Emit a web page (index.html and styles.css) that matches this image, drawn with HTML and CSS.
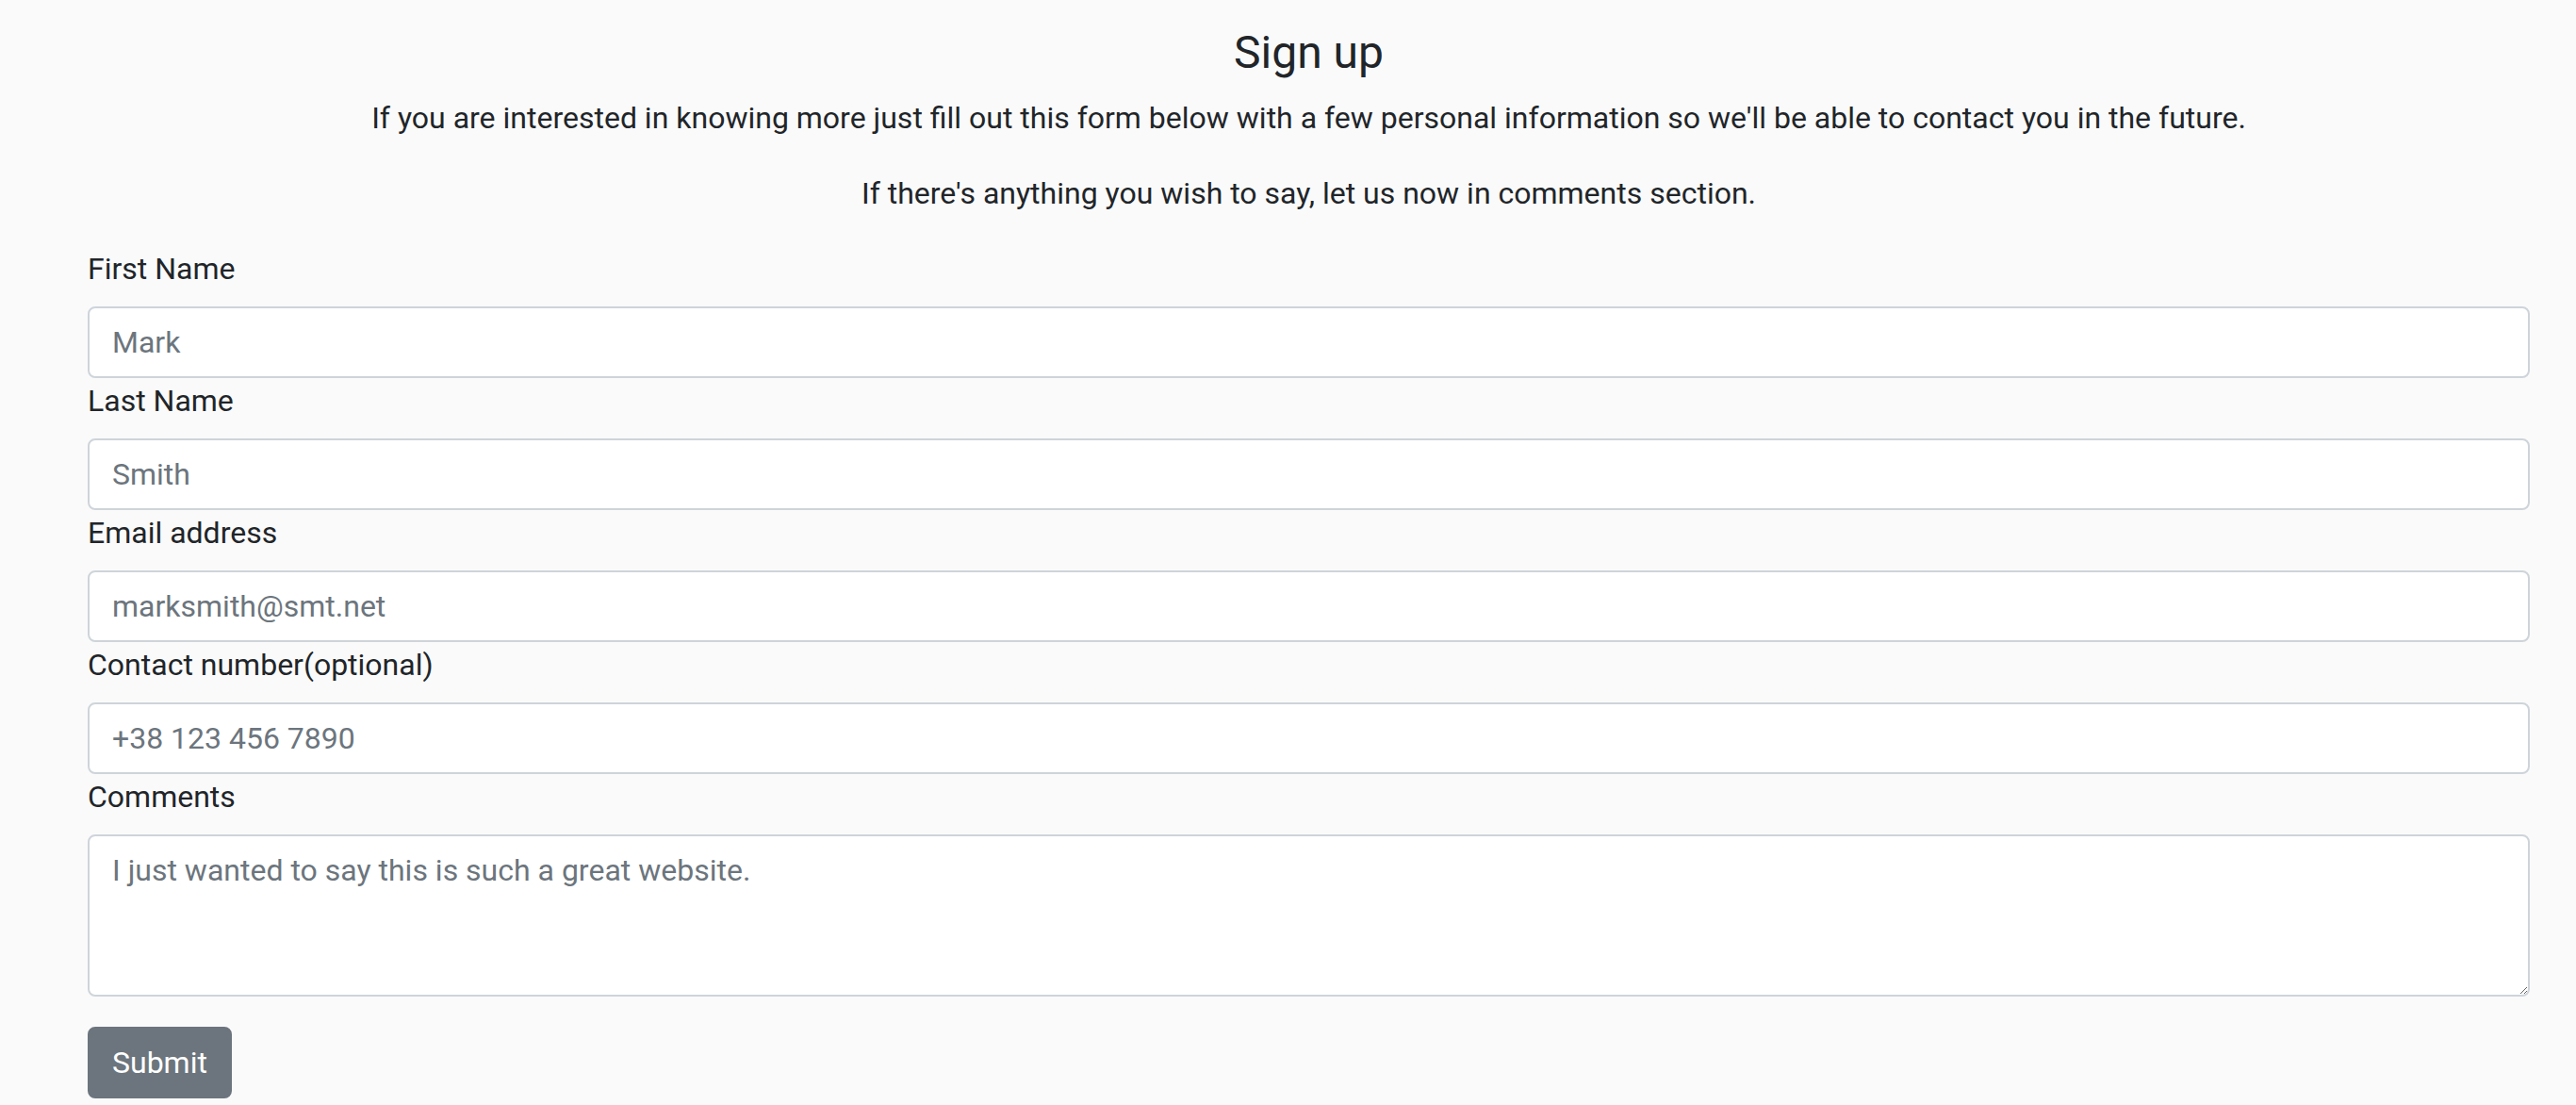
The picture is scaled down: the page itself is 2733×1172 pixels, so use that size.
FILE: index.html
```html
<!DOCTYPE html>
<html lang="en">
<head>
<meta charset="utf-8">
<title>Sign up</title>
<link rel="stylesheet" href="styles.css">
</head>
<body>
<main class="page">
  <h1 class="title">Sign up</h1>
  <p class="intro">If you are interested in knowing more just fill out this form below with a few personal information so we'll be able to contact you in the future.</p>
  <p class="intro">If there's anything you wish to say, let us now in comments section.</p>
  <form class="form">
    <label class="label" for="fname">First Name</label>
    <input class="control" id="fname" type="text" placeholder="Mark">
    <label class="label" for="lname">Last Name</label>
    <input class="control" id="lname" type="text" placeholder="Smith">
    <label class="label" for="email">Email address</label>
    <input class="control" id="email" type="email" placeholder="marksmith@smt.net">
    <label class="label" for="phone">Contact number(optional)</label>
    <input class="control" id="phone" type="tel" placeholder="+38 123 456 7890">
    <label class="label" for="comments">Comments</label>
    <textarea class="control area" id="comments" rows="3" placeholder="I just wanted to say this is such a great website."></textarea>
    <div class="actions">
      <button class="btn" type="submit">Submit</button>
    </div>
  </form>
</main>
</body>
</html>
```
FILE: styles.css
```css
* {
  box-sizing: border-box;
}

html, body {
  margin: 0;
  padding: 0;
}

body {
  background: #fafafa;
  color: #212529;
  font-family: Roboto, "Liberation Sans", sans-serif;
  font-size: 32px;
  line-height: 1.5;
}

.page {
  padding: 27px 49px 0 93px;
}

.title {
  margin: 0 0 16px;
  font-size: 48px;
  font-weight: 400;
  line-height: 1.2;
  text-align: center;
}

.intro {
  margin: 0 0 32px;
  text-align: center;
}

.form {
  display: flex;
  flex-direction: column;
}

.label {
  display: block;
  margin-bottom: 16px;
  line-height: 48px;
}

.control {
  display: block;
  width: 100%;
  height: 76px;
  padding: 12px 24px;
  font-family: inherit;
  font-size: 32px;
  line-height: 48px;
  color: #495057;
  background: #fff;
  border: 2px solid #ced4da;
  border-radius: 8px;
  outline: none;
}

.control::placeholder {
  color: #6c757d;
  opacity: 1;
}

.area {
  height: 172px;
  resize: vertical;
}

.actions {
  display: flex;
  margin-top: 32px;
}

.btn {
  height: 76px;
  padding: 12px 24px;
  font-family: inherit;
  font-size: 32px;
  line-height: 48px;
  color: #fff;
  background: #6c757d;
  border: 2px solid #6c757d;
  border-radius: 8px;
  cursor: pointer;
}
```
